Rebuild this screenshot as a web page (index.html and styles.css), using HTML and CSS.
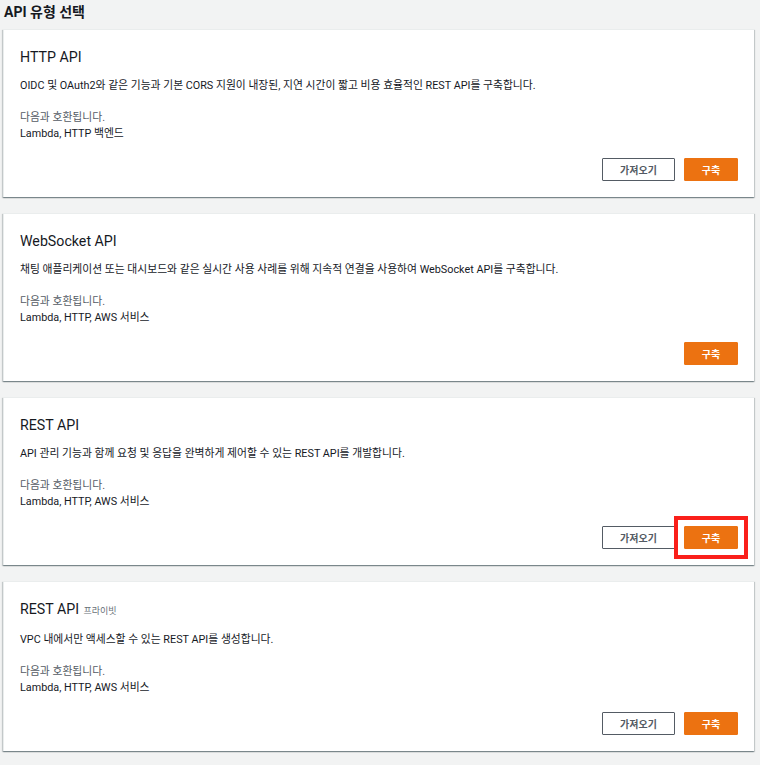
FILE: index.html
```html
<!DOCTYPE html>
<html lang="ko">
<head>
<meta charset="utf-8">
<link rel="stylesheet" href="styles.css">
</head>
<body>
<h2 class="page-title">API 유형 선택</h2>
<div class="cards">
  <section class="card">
    <h3 class="card-title">HTTP API</h3>
    <p class="desc">OIDC 및 OAuth2와 같은 기능과 기본 CORS 지원이 내장된, 지연 시간이 짧고 비용 효율적인 REST API를 구축합니다.</p>
    <p class="compat-label">다음과 호환됩니다.</p>
    <p class="compat">Lambda, HTTP 백엔드</p>
    <div class="actions">
      <button class="btn btn-normal">가져오기</button>
      <button class="btn btn-primary">구축</button>
    </div>
  </section>
  <section class="card">
    <h3 class="card-title">WebSocket API</h3>
    <p class="desc">채팅 애플리케이션 또는 대시보드와 같은 실시간 사용 사례를 위해 지속적 연결을 사용하여 WebSocket API를 구축합니다.</p>
    <p class="compat-label">다음과 호환됩니다.</p>
    <p class="compat">Lambda, HTTP, AWS 서비스</p>
    <div class="actions">
      <button class="btn btn-primary">구축</button>
    </div>
  </section>
  <section class="card">
    <h3 class="card-title">REST API</h3>
    <p class="desc">API 관리 기능과 함께 요청 및 응답을 완벽하게 제어할 수 있는 REST API를 개발합니다.</p>
    <p class="compat-label">다음과 호환됩니다.</p>
    <p class="compat">Lambda, HTTP, AWS 서비스</p>
    <div class="actions">
      <button class="btn btn-normal">가져오기</button>
      <span class="highlight"><button class="btn btn-primary">구축</button></span>
    </div>
  </section>
  <section class="card card-tall">
    <h3 class="card-title">REST API <span class="tag">프라이빗</span></h3>
    <p class="desc">VPC 내에서만 액세스할 수 있는 REST API를 생성합니다.</p>
    <p class="compat-label">다음과 호환됩니다.</p>
    <p class="compat">Lambda, HTTP, AWS 서비스</p>
    <div class="actions">
      <button class="btn btn-normal">가져오기</button>
      <button class="btn btn-primary">구축</button>
    </div>
  </section>
</div>
</body>
</html>
```
FILE: styles.css
```css
html, body {
  margin: 0;
  padding: 0;
  background: #f2f3f3;
}
body {
  font-family: "Roboto", "Noto Sans CJK KR", sans-serif;
  color: #16191f;
  width: 760px;
  height: 765px;
  overflow: hidden;
}
.page-title {
  margin: 0;
  padding: 3px 0 0 4px;
  font-size: 14px;
  line-height: 18px;
  font-weight: 700;
  color: #16191f;
}
.cards {
  display: flex;
  flex-direction: column;
  gap: 16px;
  padding: 8px 6px 0 3px;
}
.card {
  background: #fff;
  border-left: 1px solid #eaeded;
  border-top: 1px solid #eaeded;
  box-shadow: 0 1px 1px 0 rgba(0, 28, 36, 0.3), 1px 1px 1px 0 rgba(0, 28, 36, 0.15), -1px 1px 1px 0 rgba(0, 28, 36, 0.15);
  padding: 16px 16px 16px 16px;
  height: 168px;
  box-sizing: border-box;
  display: flex;
  flex-direction: column;
}
.card-tall {
  height: 170px;
}
.card-title {
  margin: 0;
  font-size: 14.2px;
  line-height: 22px;
  font-weight: 400;
  color: #16191f;
}
.tag {
  font-size: 9px;
  color: #687078;
  margin-left: 1px;
}
.desc {
  margin: 10px 0 0 0;
  font-size: 10.8px;
  line-height: 16px;
  color: #16191f;
}
.compat-label {
  margin: 15px 0 0 0;
  font-size: 10.8px;
  line-height: 17px;
  color: #545b64;
}
.compat {
  margin: 0;
  font-size: 10.8px;
  line-height: 16px;
  color: #16191f;
}
.actions {
  margin-top: auto;
  display: flex;
  justify-content: flex-end;
  align-items: center;
  gap: 9px;
  padding-right: 0;
}
.btn {
  height: 23px;
  box-sizing: border-box;
  font-family: "Roboto", "Noto Sans CJK KR", sans-serif;
  font-size: 10px;
  font-weight: 700;
  border-radius: 1px;
  cursor: pointer;
  padding: 0;
}
.btn-normal {
  width: 73px;
  background: #fff;
  color: #545b64;
  border: 1px solid #545b64;
}
.btn-primary {
  width: 54px;
  background: #ec7211;
  color: #fff;
  border: 1px solid #ec7211;
}
.highlight {
  display: flex;
  outline: 4px solid #fa1f1a;
  outline-offset: 6px;
  position: relative;
}
```
